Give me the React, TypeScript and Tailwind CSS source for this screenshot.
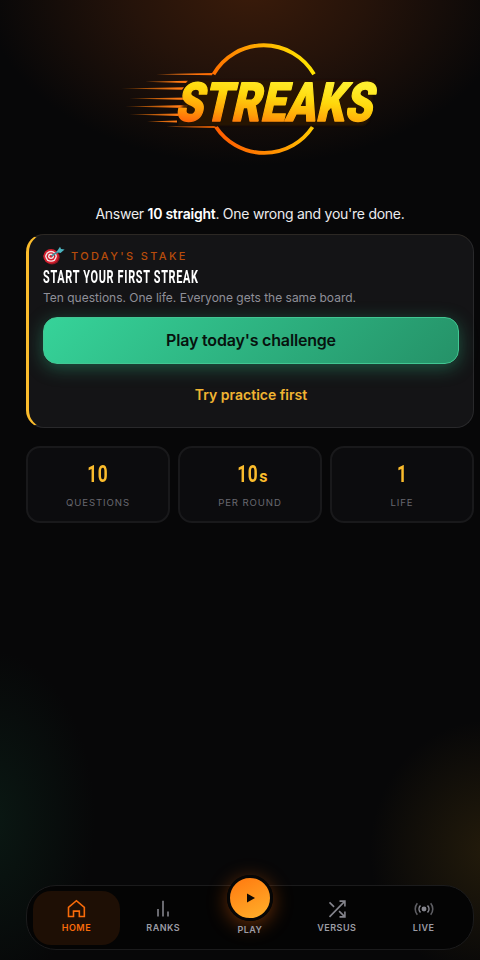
import type { ReactNode } from 'react'
import { clsx } from 'clsx'

function Logo() {
  return (
    <svg width="280" height="140" viewBox="110 30 280 140" className="block" aria-label="Streaks">
      <defs>
        <linearGradient id="ring" x1="210" y1="120" x2="318" y2="80" gradientUnits="userSpaceOnUse">
          <stop offset="0" stopColor="#ff5a00" />
          <stop offset="0.5" stopColor="#ff9a00" />
          <stop offset="1" stopColor="#ffe600" />
        </linearGradient>
        <linearGradient id="word" x1="132" y1="-42" x2="127" y2="14" gradientUnits="userSpaceOnUse">
          <stop offset="0" stopColor="#fff02e" />
          <stop offset="0.35" stopColor="#ffd80c" />
          <stop offset="0.7" stopColor="#ffa008" />
          <stop offset="1" stopColor="#ff5a0a" />
        </linearGradient>
        <linearGradient id="trail" x1="120" y1="0" x2="215" y2="0" gradientUnits="userSpaceOnUse">
          <stop offset="0" stopColor="#ff7a00" stopOpacity="0.3" />
          <stop offset="0.6" stopColor="#ff7a14" />
          <stop offset="1" stopColor="#ff6a00" />
        </linearGradient>
        <filter id="soft" x="-20%" y="-40%" width="140%" height="180%">
          <feGaussianBlur stdDeviation="1.2" />
        </filter>
      </defs>
      <g fill="none" stroke="url(#ring)" strokeWidth="3.8">
        <path d="M213.5 74.3 A58 58 0 0 1 314 74.3" />
        <path d="M216 127 A57.9 57.9 0 0 0 312.5 127" />
      </g>
      <g fill="url(#trail)">
        <path d="M156 74.3 L213 73 L212 75.2 Z" />
        <path d="M145 81.8 L188 80.8 L186 83 Z" />
        <path d="M121 88.4 L184 87.3 L182 89.8 Z" />
        <path d="M129 98.6 L188 97.5 L190 100 Z" />
        <path d="M125 106.4 L188 105 L186 108 Z" />
        <path d="M129 114.5 L180 113.4 L178 116 Z" />
        <path d="M147 121.6 L177 120.6 L177 122.6 Z" />
        <path d="M166 126.7 L214 126 L219 128 Z" />
      </g>
      <path
        d="M188 80.500 H375 L369 120 Q367 125.500 361 125.500 H178 Z"
        fill="#2a1503"
        opacity="0.85"
        filter="url(#soft)"
      />
      <text
        transform="translate(174.500 120.700) skewX(-13) scale(0.815 1)"
        fontFamily="Roboto, sans-serif"
        fontWeight="900"
        fontSize="54"
        letterSpacing="0.500"
        fill="url(#word)"
        stroke="url(#word)"
        strokeWidth="1.400"
        strokeLinejoin="round"
      >
        STREAKS
      </text>
    </svg>
  )
}

function TargetIcon() {
  return (
    <svg width="22" height="19" viewBox="0 0 22 19" className="mr-[6px] shrink-0 -translate-y-px">
      <ellipse cx="9" cy="11.300" rx="7.700" ry="7.200" fill="#8f1622" />
      <ellipse cx="8" cy="10.300" rx="7.700" ry="7.300" fill="#d5202f" />
      <ellipse cx="8" cy="10.300" rx="5.800" ry="5.500" fill="#f3e9ea" />
      <ellipse cx="8" cy="10.300" rx="4.400" ry="4.100" fill="#d5202f" />
      <ellipse cx="8" cy="10.300" rx="2.900" ry="2.700" fill="#f3e9ea" />
      <ellipse cx="8" cy="10.300" rx="1.500" ry="1.400" fill="#d5202f" />
      <path d="M8.500 10 L16 5" stroke="#3d8d9c" strokeWidth="1.600" />
      <path d="M13.500 6 L17 0.800 L18 3 L21.600 3.600 L17.500 7 Z" fill="#4cb4c0" />
    </svg>
  )
}

function StatCard({ value, suffix, label }: { value: string; suffix?: string; label: string }) {
  return (
    <div className="flex h-[77px] flex-1 flex-col items-center rounded-[14px] border-2 border-[#19191b] bg-[#0c0c0e] pt-[11px]">
      <div className="flex h-[30px] items-baseline font-[Roboto] font-bold text-[#fbbc2c]">
        <span className="inline-block scale-x-[0.72] text-[24px] leading-[30px] tracking-[1px]">{value}</span>
        {suffix && <span className="-ml-[3px] text-[16px]">{suffix}</span>}
      </div>
      <div className="mt-[7px] text-[9.6px] leading-[14px] tracking-[0.9px] text-[#68686f]">{label}</div>
    </div>
  )
}

function NavItem({ label, active, children }: { label: string; active?: boolean; children: ReactNode }) {
  return (
    <div
      className={clsx(
        'flex h-[54px] flex-1 flex-col items-center rounded-[18px] pt-[8px] text-[9px] font-semibold tracking-[0.5px]',
        active ? 'bg-[#1e0f05] text-[#f96b0a]' : 'text-[#9c9ca5]',
      )}
    >
      <svg
        width="20"
        height="20"
        viewBox="0 0 24 24"
        fill="none"
        stroke="currentColor"
        strokeWidth="1.9"
        className={active ? '' : 'opacity-85'}
      >
        {children}
      </svg>
      <span className="mt-[2px] leading-[14px]">{label}</span>
    </div>
  )
}

export default function App() {
  return (
    <div className="flex h-[960px] w-[480px] flex-col overflow-hidden bg-[#070708] bg-[radial-gradient(ellipse_265px_175px_at_250px_-10px,#3a1b0a_0%,#25130a_45%,transparent_100%),radial-gradient(ellipse_105px_170px_at_-10px_820px,#0a1813_0%,transparent_100%),radial-gradient(ellipse_120px_130px_at_490px_850px,#231b0b_0%,transparent_100%)] pl-[26px] font-[Inter,sans-serif]">
      {/* Hero */}
      <div className="mt-[30px] ml-[84px]">
        <Logo />
      </div>
      <p className="mt-[33px] w-[448px] text-center text-[14px] leading-[21px] tracking-[-0.26px] whitespace-nowrap text-[#ececee]">
        Answer <strong className="font-semibold text-white">10 straight</strong>. One wrong and you're done.
      </p>

      {/* Today's stake */}
      <section className="mt-[10px] h-[194px] w-[448px] rounded-[18px] border border-l-[3px] border-[#29292b] border-t-[#2c2824] border-l-[#fbbc2c] bg-[#141416] px-[14px] pt-[11px]">
        <div className="flex h-[20px] items-center">
          <TargetIcon />
          <span className="text-[11px] font-medium tracking-[2.35px] text-[#b74c0b]">TODAY'S STAKE</span>
        </div>
        <h2 className="w-max origin-left scale-x-[0.623] font-[Roboto] text-[17.5px] leading-[23px] font-bold tracking-[1.1px] whitespace-nowrap text-white">
          START YOUR FIRST STREAK
        </h2>
        <p className="text-[12px] leading-[18px] whitespace-nowrap text-[#8f8f98]">
          Ten questions. One life. Everyone gets the same board.
        </p>
        <button className="mt-[10px] block h-[47px] w-full rounded-[14px] border border-[#42c793] bg-linear-[135deg] from-[#36d399] to-[#259268] pb-[2px] text-[16px] font-semibold tracking-[-0.18px] text-[#07120e] shadow-[0_4px_18px_rgba(52,211,153,0.35)]">
          Play today's challenge
        </button>
        <button className="mt-[16px] block h-[28px] w-full text-[14px] font-semibold text-[#f0b432]">
          Try practice first
        </button>
      </section>

      <div className="mt-[18px] flex w-[448px] gap-2">
        <StatCard value="10" label="QUESTIONS" />
        <StatCard value="10" suffix="s" label="PER ROUND" />
        <StatCard value="1" label="LIFE" />
      </div>

      {/* Bottom nav */}
      <nav className="mt-auto mb-[10px] flex h-[65px] w-[448px] rounded-[30px] border border-[#1b1b1c] bg-[#040404] px-[6px] pt-[5px]">
        <NavItem label="HOME" active>
          <path d="M3 10 L12.500 2 L22 10 V21 H16 V14.500 H9 V21 H3 Z" />
        </NavItem>
        <NavItem label="RANKS">
          <path d="M6 21 V12 M12 21 V2 M18 21 V15" />
        </NavItem>
        <div className="flex flex-1 flex-col items-center">
          <div className="-mt-[16px] flex size-[46px] shrink-0 items-center justify-center rounded-full border-[3px] border-[#060606] bg-linear-[155deg] from-[#ff780f] to-[#ffb12b] shadow-[0_4px_20px_rgba(255,107,10,0.4)]">
            <svg width="10" height="12" viewBox="0 0 10 12" className="ml-[2px]">
              <path d="M1 1.500 L9 6 L1 10.500 Z" fill="#0c0704" />
            </svg>
          </div>
          <span className="mt-[2px] text-[9px] leading-[14px] font-semibold tracking-[0.4px] text-[#9c9ca5]">PLAY</span>
        </div>
        <NavItem label="VERSUS">
          <path d="M15 2.500h6.500v6.500 M3 21.500 21.500 2.500 M21.500 15v6.500h-6.500 M14.500 14.500l7 7 M3 4l5.500 5.500" />
        </NavItem>
        <NavItem label="LIVE">
          <circle cx="12" cy="12" r="2" fill="currentColor" />
          <path d="M7.800 7.800a6 6 0 0 0 0 8.400 M16.200 7.800a6 6 0 0 1 0 8.400" />
          <path d="M4 5a11 11 0 0 0 0 14 M20 5a11 11 0 0 1 0 14" opacity="0.7" />
        </NavItem>
      </nav>
    </div>
  )
}
